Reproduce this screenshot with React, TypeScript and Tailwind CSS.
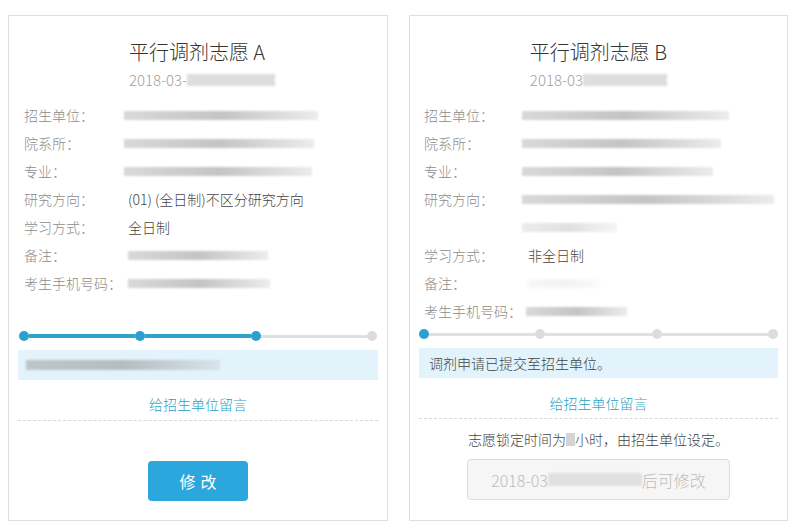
import React from "react";

const FONT = {
  fontFamily: '"Noto Sans CJK SC", "Noto Sans", sans-serif',
};

type Row = {
  label: string;
  value?: string;
  bar?: string;
};

const Blur: React.FC<{ className: string }> = ({ className }) => (
  <div
    className={
      "h-[9px] blur-[1.2px] bg-linear-to-r from-[#d9d9d9] via-[#c4c4c4] to-[#ececec] " +
      className
    }
  />
);

const InfoRow: React.FC<{ row: Row }> = ({ row }) => (
  <div className="flex items-center h-[28px] text-[14px]">
    <div className="w-[104px] shrink-0 text-[#8c8c8c]">{row.label}</div>
    {row.value ? (
      <div className="text-[#444]">{row.value}</div>
    ) : (
      <Blur className={row.bar || "w-[190px]"} />
    )}
  </div>
);

const Steps: React.FC<{ done: number }> = ({ done }) => {
  const items: React.ReactNode[] = [];
  for (let i = 0; i < 4; i++) {
    items.push(
      <div
        key={"d" + i}
        className={
          "w-[10px] h-[10px] rounded-full shrink-0 " +
          (i < done ? "bg-[#2b9fcf]" : "bg-[#dcdcdc]")
        }
      />
    );
    if (i < 3) {
      items.push(
        <div
          key={"s" + i}
          className={
            "flex-1 " +
            (i < done - 1 ? "h-[4px] bg-[#2fa3cd]" : "h-[3px] bg-[#e0e0e0]")
          }
        />
      );
    }
  }
  return <div className="flex items-center h-[10px]">{items}</div>;
};

const Header: React.FC<{
  title: string;
  date: string;
  blur: string;
  shift?: string;
}> = ({ title, date, blur, shift }) => (
  <div className="mx-auto w-fit flex flex-col">
    <div className="text-[20px] leading-[28px] text-[#333]">{title}</div>
    <div
      className={
        "mt-[3px] flex items-center h-[22px] text-[15px] text-[#a0a0a0] " +
        (shift || "")
      }
    >
      <span>{date}</span>
      <div className={"h-[12px] blur-[1px] bg-[#dedede] " + blur} />
    </div>
  </div>
);

const rowsA: Row[] = [
  { label: "招生单位：", bar: "w-[194px] -ml-[4px]" },
  { label: "院系所：", bar: "w-[190px] -ml-[4px]" },
  { label: "专业：", bar: "w-[188px] -ml-[4px]" },
  { label: "研究方向：", value: "(01) (全日制)不区分研究方向" },
  { label: "学习方式：", value: "全日制" },
  { label: "备注：", bar: "w-[140px]" },
  { label: "考生手机号码：", bar: "w-[142px]" },
];

const rowsB: Row[] = [
  { label: "招生单位：", bar: "w-[207px] -ml-[6px]" },
  { label: "院系所：", bar: "w-[199px] -ml-[6px]" },
  { label: "专业：", bar: "w-[191px] -ml-[6px]" },
  { label: "研究方向：", bar: "w-[252px] -ml-[6px]" },
  { label: "", bar: "w-[95px] -ml-[6px] opacity-50" },
  { label: "学习方式：", value: "非全日制" },
  { label: "备注：", bar: "w-[72px] opacity-20" },
  { label: "考生手机号码：", bar: "w-[101px] -ml-[2px]" },
];

export default function App() {
  return (
    <div
      className="w-[796px] h-[524px] bg-white flex gap-[21px] pl-[8px] pt-[15px] font-light"
      style={FONT}
    >
      {/* card A */}
      <div className="w-[380px] h-[506px] border border-[#dedede] flex flex-col pt-[22px]">
        <Header
          title="平行调剂志愿 A"
          date="2018-03-"
          blur="w-[88px]"
          shift="-mr-[8px]"
        />
        <div className="mt-[10px] pl-[15px]">
          {rowsA.map((r, i) => (
            <InfoRow key={i} row={r} />
          ))}
        </div>
        <div className="mt-[34px] px-[10px]">
          <Steps done={3} />
        </div>
        <div className="mt-[9px] mx-[9px] h-[30px] bg-[#e2f3fb] flex items-center pl-[8px]">
          <div className="h-[10px] w-[194px] blur-[1.2px] bg-linear-to-r from-[#bfc6cb] via-[#b5bdc2] to-[#d7e3ea]" />
        </div>
        <div className="mt-[14px] text-center text-[14px] leading-[20px] text-[#2d9fc6]">
          给招生单位留言
        </div>
        <div className="mt-[6px] mx-[9px] border-t border-dashed border-[#d8d8d8]" />
        <button className="mt-[40px] mx-auto w-[100px] h-[40px] rounded-[4px] bg-[#2ba7dd] text-white text-[16px] font-normal tracking-[5px] pl-[5px]">
          修改
        </button>
      </div>

      {/* card B */}
      <div className="w-[379px] h-[506px] border border-[#dedede] flex flex-col pt-[22px]">
        <Header title="平行调剂志愿 B" date="2018-03" blur="w-[84px]" />
        <div className="mt-[10px] pl-[14px]">
          {rowsB.map((r, i) => (
            <InfoRow key={i} row={r} />
          ))}
        </div>
        <div className="mt-[4px] px-[9px]">
          <Steps done={1} />
        </div>
        <div className="mt-[9px] mx-[9px] h-[30px] bg-[#e2f3fb] flex items-center pl-[10px] text-[14px] text-[#444]">
          调剂申请已提交至招生单位。
        </div>
        <div className="mt-[15px] text-center text-[14px] leading-[20px] text-[#2d9fc6]">
          给招生单位留言
        </div>
        <div className="mt-[5px] mx-[9px] border-t border-dashed border-[#d8d8d8]" />
        <div className="mt-[10px] flex justify-center items-center text-[14px] leading-[20px] text-[#444]">
          <span>志愿锁定时间为</span>
          <span className="inline-block w-[9px] h-[13px] bg-[#d4d4d4] blur-[0.5px]" />
          <span>小时，由招生单位设定。</span>
        </div>
        <div className="mt-[10px] mx-auto w-[263px] h-[41px] rounded-[4px] border border-[#dcdcdc] bg-[#f6f6f6] flex items-center justify-center text-[16px] text-[#bcbcbc]">
          <span>2018-03</span>
          <div className="w-[94px] h-[13px] bg-[#e0e0e0] blur-[1px]" />
          <span>后可修改</span>
        </div>
      </div>
    </div>
  );
}
